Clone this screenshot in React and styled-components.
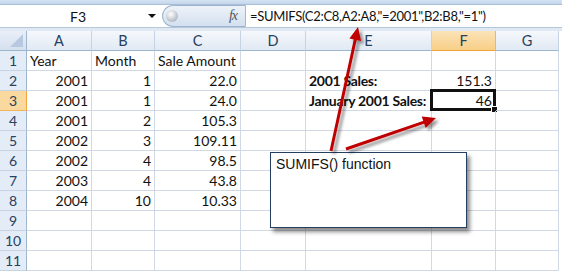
import React from 'react';
import styled, { createGlobalStyle } from 'styled-components';

const GlobalStyle = createGlobalStyle`
  html, body {
    margin: 0;
    padding: 0;
    background: #fff;
  }
`;

const COLS = [
  { key: 'A', w: 65 },
  { key: 'B', w: 63 },
  { key: 'C', w: 86 },
  { key: 'D', w: 65 },
  { key: 'E', w: 126 },
  { key: 'F', w: 64 },
  { key: 'G', w: 63 },
];

const ROWS = [
  ['Year', 'Month', 'Sale Amount', '', '', '', ''],
  ['2001', '1', '22.0', '', '2001 Sales:', '151.3', ''],
  ['2001', '1', '24.0', '', 'January 2001 Sales:', '46', ''],
  ['2001', '2', '105.3', '', '', '', ''],
  ['2002', '3', '109.11', '', '', '', ''],
  ['2002', '4', '98.5', '', '', '', ''],
  ['2003', '4', '43.8', '', '', '', ''],
  ['2004', '10', '10.33', '', '', '', ''],
  ['', '', '', '', '', '', ''],
  ['', '', '', '', '', '', ''],
  ['', '', '', '', '', '', ''],
];

const Page = styled.div`
  position: relative;
  width: 562px;
  height: 273px;
  overflow: hidden;
  background: #fff;
  font-family: Lato, 'Open Sans', sans-serif;
`;

const TopStrip = styled.div`
  height: 4px;
  background: linear-gradient(#d5e2f2, #c4d6ec);
  border-bottom: 1px solid #a9bfd6;
`;

const FormulaBar = styled.div`
  display: flex;
  align-items: stretch;
  height: 22px;
  background: #fff;
  border-bottom: 1px solid #b7c7da;
`;

const NameBox = styled.div`
  position: relative;
  width: 162px;
  display: flex;
  align-items: center;
  justify-content: center;
  font-size: 14px;
  color: #111;
  padding-right: 6px;
  box-sizing: border-box;
`;

const DropArrow = styled.span`
  position: absolute;
  right: 6px;
  top: 9px;
  width: 0;
  height: 0;
  border-left: 4px solid transparent;
  border-right: 4px solid transparent;
  border-top: 4px solid #111;
`;

const FxPill = styled.div`
  width: 84px;
  display: flex;
  align-items: center;
  justify-content: space-between;
  padding: 0 8px 0 3px;
  box-sizing: border-box;
  background: linear-gradient(#eef3fa, #d3e0ef);
  border: 1px solid #9fb5cf;
  border-right-color: #a7b8cc;
  border-radius: 12px 0 0 12px;
`;

const Knob = styled.span`
  width: 12px;
  height: 12px;
  border-radius: 50%;
  background: radial-gradient(circle at 40% 35%, #fff, #bfc5cc 60%, #9aa3ad);
`;

const Fx = styled.span`
  font-family: 'Liberation Serif', serif;
  font-style: italic;
  font-size: 14px;
  color: #555;
  letter-spacing: -1px;
`;

const FormulaText = styled.div`
  flex: 1;
  display: flex;
  align-items: center;
  padding-left: 4px;
  font-size: 13px;
  letter-spacing: -0.3px;
  color: #111;
  white-space: nowrap;
`;

const Gap = styled.div`
  height: 3px;
  background: #dfe8f3;
`;

const Sheet = styled.div`
  display: grid;
  grid-template-columns: 27px ${COLS.map((c) => c.w + 'px').join(' ')};
  grid-auto-rows: 20px;
`;

const Corner = styled.div`
  background: linear-gradient(#e9eff8, #d5e0ee);
  border-right: 1px solid #9eb6ce;
  border-bottom: 1px solid #9eb6ce;
  position: relative;
  &::after {
    content: '';
    position: absolute;
    right: 3px;
    bottom: 3px;
    border-left: 13px solid transparent;
    border-bottom: 13px solid #b6c9e0;
  }
`;

const ColHead = styled.div`
  display: flex;
  align-items: center;
  justify-content: center;
  font-size: 14.5px;
  color: #27415f;
  background: ${(p) =>
    p.$active
      ? 'linear-gradient(#fbe3b8, #f8cf87)'
      : 'linear-gradient(#f5f8fc, #e1e9f3)'};
  border-right: 1px solid ${(p) => (p.$active ? '#f2b45c' : '#c5d3e3')};
  border-bottom: 1px solid ${(p) => (p.$active ? '#f2a33a' : '#9eb6ce')};
`;

const RowHead = styled.div`
  display: flex;
  align-items: center;
  justify-content: center;
  font-size: 14px;
  color: #27415f;
  background: ${(p) => (p.$active ? '#f9d99d' : '#e4ecf7')};
  border-right: 1px solid ${(p) => (p.$active ? '#f2a33a' : '#9eb6ce')};
  border-bottom: 1px solid ${(p) => (p.$active ? '#f2b45c' : '#c5d3e3')};
`;

const Cell = styled.div`
  position: relative;
  display: flex;
  align-items: center;
  justify-content: ${(p) => (p.$num ? 'flex-end' : 'flex-start')};
  padding: 0 3px;
  font-size: 14px;
  font-weight: ${(p) => (p.$bold ? 700 : 400)};
  letter-spacing: ${(p) => (p.$bold ? '-0.3px' : '0')};
  color: #111;
  white-space: nowrap;
  border-right: 1px solid #d0d7e5;
  border-bottom: 1px solid #d0d7e5;
  box-sizing: border-box;
  min-width: 0;
`;

const Selection = styled.div`
  position: absolute;
  left: -2px;
  top: -2px;
  right: -1px;
  bottom: -1px;
  border: 3px solid #111;
  pointer-events: none;
  &::after {
    content: '';
    position: absolute;
    right: -5px;
    bottom: -5px;
    width: 5px;
    height: 5px;
    background: #111;
    border: 1px solid #fff;
  }
`;

const Callout = styled.div`
  position: absolute;
  left: 270px;
  top: 152px;
  width: 197px;
  height: 76px;
  box-sizing: border-box;
  background: #fff;
  border: 1px solid #243f60;
  box-shadow: 3px 4px 4px rgba(0, 0, 0, 0.45);
  padding: 3px 5px;
  font-family: 'Liberation Sans', Arial, sans-serif;
  font-size: 14px;
  color: #111;
`;

const Arrows = styled.svg`
  position: absolute;
  left: 0;
  top: 0;
  pointer-events: none;
`;

const isNum = (v) => v !== '' && !isNaN(Number(v));

function Arrow({ x1, y1, x2, y2 }) {
  const dx = x2 - x1;
  const dy = y2 - y1;
  const len = Math.hypot(dx, dy);
  const ux = dx / len;
  const uy = dy / len;
  const hl = 13;
  const hw = 6;
  const bx = x2 - ux * hl;
  const by = y2 - uy * hl;
  const pts = `${x2},${y2} ${bx - uy * hw},${by + ux * hw} ${bx + uy * hw},${by - ux * hw}`;
  return (
    <g filter="url(#shadow)">
      <line x1={x1} y1={y1} x2={bx + ux * 2} y2={by + uy * 2} stroke="#c00000" strokeWidth="3" />
      <polygon points={pts} fill="#c00000" />
    </g>
  );
}

export default function App() {
  return (
    <Page>
      <GlobalStyle />
      <TopStrip />
      <FormulaBar>
        <NameBox>
          F3
          <DropArrow />
        </NameBox>
        <FxPill>
          <Knob />
          <Fx>fx</Fx>
        </FxPill>
        <FormulaText>=SUMIFS(C2:C8,A2:A8,"=2001",B2:B8,"=1")</FormulaText>
      </FormulaBar>
      <Gap />
      <Sheet>
        <Corner />
        {COLS.map((c) => (
          <ColHead key={c.key} $active={c.key === 'F'}>
            {c.key}
          </ColHead>
        ))}
        {ROWS.map((row, ri) => (
          <React.Fragment key={ri}>
            <RowHead $active={ri === 2}>{ri + 1}</RowHead>
            {row.map((v, ci) => (
              <Cell key={ci} $num={isNum(v)} $bold={ci === 4 && v !== ''}>
                {v}
                {ri === 2 && ci === 5 && <Selection />}
              </Cell>
            ))}
          </React.Fragment>
        ))}
      </Sheet>
      <Callout>SUMIFS() function</Callout>
      <Arrows width="562" height="273" viewBox="0 0 562 273">
        <defs>
          <filter id="shadow" x="-50%" y="-50%" width="200%" height="200%">
            <feDropShadow dx="3" dy="3" stdDeviation="1.6" floodColor="#000" floodOpacity="0.4" />
          </filter>
        </defs>
        <Arrow x1={331} y1={151} x2={358} y2={27} />
        <Arrow x1={346} y1={149} x2={436} y2={118} />
      </Arrows>
    </Page>
  );
}
